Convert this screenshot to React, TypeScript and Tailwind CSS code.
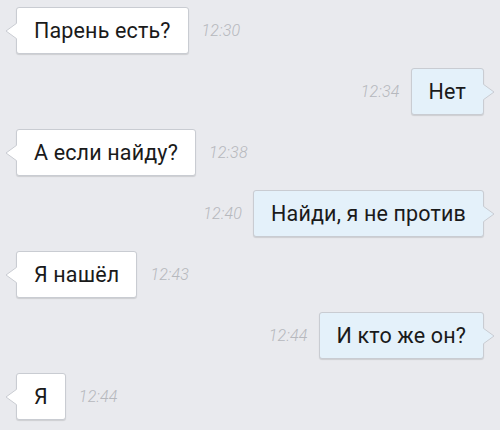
import React from "react";

type Msg = { text: string; time: string; out: boolean };

const msgs: Msg[] = [
  { text: "Парень есть?", time: "12:30", out: false },
  { text: "Нет", time: "12:34", out: true },
  { text: "А если найду?", time: "12:38", out: false },
  { text: "Найди, я не против", time: "12:40", out: true },
  { text: "Я нашёл", time: "12:43", out: false },
  { text: "И кто же он?", time: "12:44", out: true },
  { text: "Я", time: "12:44", out: false },
];

function Time({ t }: { t: string }) {
  return (
    <span className="text-[16px] italic font-light text-[#b6b8bd] tracking-[0.2px]">{t}</span>
  );
}

function Bubble({ m }: { m: Msg }) {
  const fill = m.out ? "#e4f1fa" : "#ffffff";
  return (
    <div
      className={`relative flex h-[47px] items-center rounded-[3px] border border-[#c9ccd2] px-[17px] text-[21.5px] tracking-[0.15px] text-[#1a1a1a] shadow-[0_1px_1px_rgba(0,0,0,0.12)] ${
        m.out ? "bg-[#e4f1fa]" : "bg-white"
      }`}
    >
      {m.out ? (
        <svg className="absolute right-[-12px] top-[14px]" width="12" height="18" viewBox="0 0 12 18">
          <path d="M0 1 L11 9 L0 17" fill={fill} stroke="#c9ccd2" strokeWidth="1" />
          <rect x="-1" y="1.5" width="1.5" height="15" fill={fill} />
        </svg>
      ) : (
        <svg className="absolute left-[-12px] top-[14px]" width="12" height="18" viewBox="0 0 12 18">
          <path d="M12 1 L1 9 L12 17" fill={fill} stroke="#c9ccd2" strokeWidth="1" />
          <rect x="11.5" y="1.5" width="1.5" height="15" fill={fill} />
        </svg>
      )}
      <span className="leading-none">{m.text}</span>
    </div>
  );
}

export default function App() {
  return (
    <div
      className="flex h-[430px] w-[500px] flex-col gap-[14px] overflow-hidden bg-[#e9eaee] px-4 pt-[7px]"
      style={{ fontFamily: "Roboto, 'Noto Sans', sans-serif" }}
    >
      {msgs.map((m, i) =>
        m.out ? (
          <div key={i} className="flex items-center justify-end gap-[11px]">
            <Time t={m.time} />
            <Bubble m={m} />
          </div>
        ) : (
          <div key={i} className="flex items-center gap-[13px]">
            <Bubble m={m} />
            <Time t={m.time} />
          </div>
        )
      )}
    </div>
  );
}
